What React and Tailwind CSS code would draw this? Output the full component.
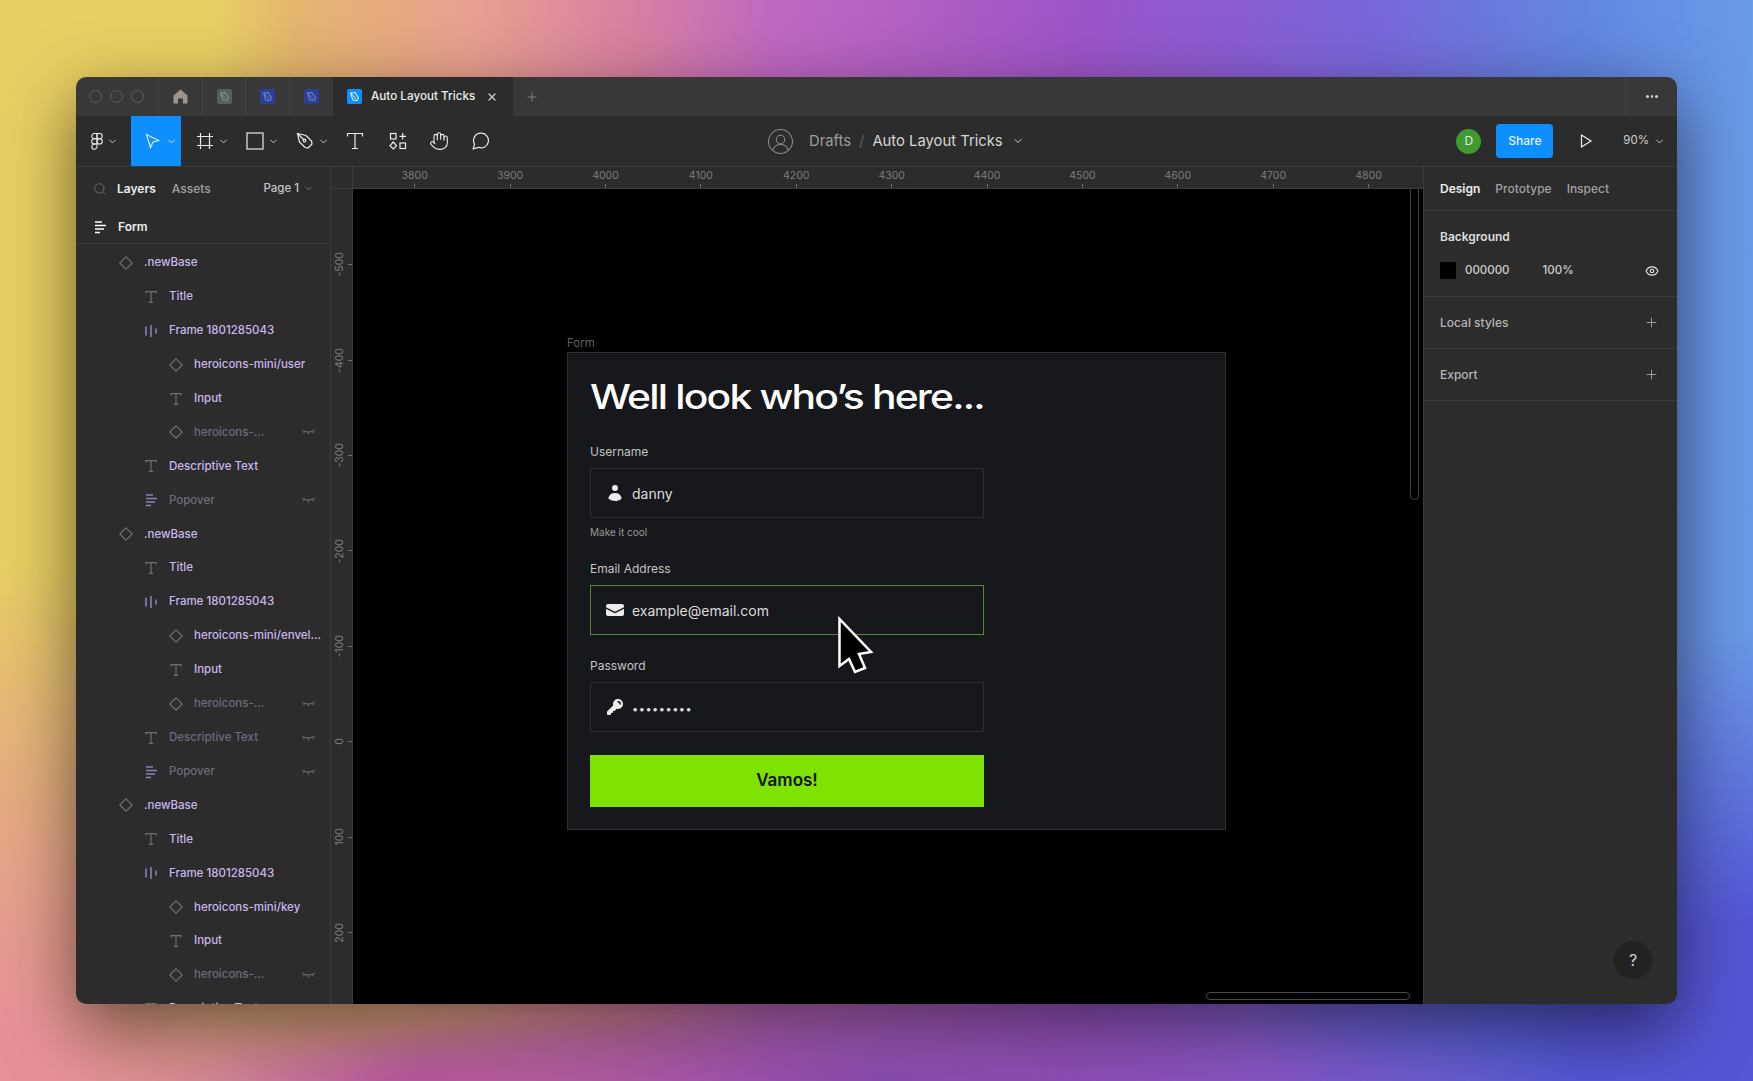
import { ChevronDown, Eye, Figma, Hand, Plus, Search, X } from 'lucide-react'

const LAYERS = [
  { d: 0, icon: 'diamond', label: '.newBase' },
  { d: 1, icon: 'text', label: 'Title' },
  { d: 1, icon: 'bars', label: 'Frame 1801285043' },
  { d: 2, icon: 'diamond', label: 'heroicons-mini/user' },
  { d: 2, icon: 'text', label: 'Input' },
  { d: 2, icon: 'diamond', label: 'heroicons-...', hidden: true },
  { d: 1, icon: 'text', label: 'Descriptive Text' },
  { d: 1, icon: 'lines', label: 'Popover', hidden: true },
  { d: 0, icon: 'diamond', label: '.newBase' },
  { d: 1, icon: 'text', label: 'Title' },
  { d: 1, icon: 'bars', label: 'Frame 1801285043' },
  { d: 2, icon: 'diamond', label: 'heroicons-mini/envel...' },
  { d: 2, icon: 'text', label: 'Input' },
  { d: 2, icon: 'diamond', label: 'heroicons-...', hidden: true },
  { d: 1, icon: 'text', label: 'Descriptive Text', hidden: true },
  { d: 1, icon: 'lines', label: 'Popover', hidden: true },
  { d: 0, icon: 'diamond', label: '.newBase' },
  { d: 1, icon: 'text', label: 'Title' },
  { d: 1, icon: 'bars', label: 'Frame 1801285043' },
  { d: 2, icon: 'diamond', label: 'heroicons-mini/key' },
  { d: 2, icon: 'text', label: 'Input' },
  { d: 2, icon: 'diamond', label: 'heroicons-...', hidden: true },
  { d: 1, icon: 'text', label: 'Descriptive Text' },
]

const DEPTH = ['pl-[42px]', 'pl-[67px]', 'pl-[92px]']
const TOP_RULER = [3800, 3900, 4000, 4100, 4200, 4300, 4400, 4500, 4600, 4700, 4800]
const LEFT_RULER = [-500, -400, -300, -200, -100, 0, 100, 200]

function FileIcon({ bg, fg }) {
  return (
    <svg width="15" height="15" viewBox="0 0 15 15">
      <rect width="15" height="15" rx="2" fill={bg} />
      <path d="M3.5 4 8 3.5 11.5 9 10 11.5 6 11Z" fill="none" stroke={fg} strokeWidth="1.1" />
      <path d="M4 4 9 10" stroke={fg} strokeWidth="0.9" />
    </svg>
  )
}

function LayerIcon({ type, muted }) {
  if (type === 'diamond') {
    return (
      <svg className="shrink-0" width="16" height="16" viewBox="0 0 16 16" fill="none" stroke="#6f6f6f" strokeWidth="1.2">
        <path d="M8 1.8 14.2 8 8 14.2 1.8 8Z" />
      </svg>
    )
  }
  if (type === 'text') {
    return (
      <svg className="shrink-0" width="16" height="16" viewBox="0 0 16 16" fill="none" stroke="#6f6f6f" strokeWidth="1.2">
        <path d="M3 4.5V2.6h10v1.9M8 2.6v10.8M5.8 13.4h4.4" />
      </svg>
    )
  }
  if (type === 'bars') {
    return (
      <svg className="shrink-0" width="16" height="16" viewBox="0 0 16 16" stroke="#a58fd6" strokeWidth="1.3">
        <path d="M3 3.5v9M8 2v12M13 5.5v5" />
      </svg>
    )
  }
  return (
    <svg className="shrink-0" width="16" height="16" viewBox="0 0 16 16" stroke={muted ? '#8f7fb8' : '#ffffff'} strokeWidth="1.6">
      <path d="M3 3h7M3 6.5h11M3 10h9M3 13.5h5" />
    </svg>
  )
}

function ClosedEye() {
  return (
    <svg className="shrink-0" width="15" height="8" viewBox="0 0 15 8" fill="none" stroke="#77737f" strokeWidth="1">
      <path d="M1 2c3 2.6 10 2.6 13 0M3.5 3.6 2.4 5.4M7.5 4.4v2M11.5 3.6l1.1 1.8" />
    </svg>
  )
}

function LayerRow({ d, icon, label, hidden }) {
  return (
    <div className={`flex h-[33.92px] shrink-0 items-center gap-[10px] pr-[14px] ${DEPTH[d]}`}>
      <LayerIcon type={icon} muted />
      <span className={`flex-1 whitespace-nowrap text-[11.5px] font-medium ${hidden ? 'text-[#6f6b7c]' : 'text-[#c9b8ec]'}`}>
        {label}
      </span>
      {hidden && <ClosedEye />}
    </div>
  )
}

function ToolChevron() {
  return <ChevronDown size={11} strokeWidth={2} className="text-[#cfcfcf]" />
}

function ToolSlot({ children }) {
  return (
    <div className="flex h-full w-[50px] items-center pl-[14px]">
      <div className="flex h-[20px] w-[20px] items-center justify-center">{children}</div>
      <div className="ml-[3px]">
        <ToolChevron />
      </div>
    </div>
  )
}

function PlainTool({ children }) {
  return <div className="flex h-full w-[42px] items-center justify-center text-[#ececec]">{children}</div>
}

function Toolbar() {
  return (
    <div className="flex h-[51px] shrink-0 items-center border-b border-[#3c3c3c] bg-[#2c2c2c]">
      <div className="flex h-full w-[55px] items-center pl-[12px] text-[#ececec]">
        <Figma size={18} strokeWidth={1.4} />
        <div className="ml-[1px]">
          <ToolChevron />
        </div>
      </div>
      <div className="flex h-full w-[50px] items-center bg-[#0d8fff] pl-[12px]">
        <svg width="18" height="18" viewBox="0 0 18 18" fill="none" stroke="#d9ecff" strokeWidth="1.2">
          <path d="M3.5 2.5 15.5 8.5 10 10 7.5 15.5Z" />
        </svg>
        <div className="ml-[5px]">
          <ChevronDown size={11} strokeWidth={2} className="text-[#d9ecff]" />
        </div>
      </div>
      <div className="flex h-full text-[#ececec]">
        <ToolSlot>
          <svg width="18" height="18" viewBox="0 0 18 18" fill="none" stroke="currentColor" strokeWidth="1.2">
            <path d="M4.5 1v16M13.5 1v16M1 4.5h16M1 13.5h16" />
          </svg>
        </ToolSlot>
        <ToolSlot>
          <svg width="18" height="18" viewBox="0 0 18 18" fill="none" stroke="currentColor" strokeWidth="1.2">
            <rect x="1" y="1" width="16" height="16" />
          </svg>
        </ToolSlot>
        <ToolSlot>
          <svg width="18" height="18" viewBox="0 0 18 18" fill="none" stroke="currentColor" strokeWidth="1.2">
            <path d="M1.5 1.5 10 3.5 15.5 9 16 12 12 16 9 15.5 3.5 10Z" />
            <path d="M1.5 1.5 7.5 7.5" />
            <circle cx="8.5" cy="8.5" r="1.3" />
          </svg>
        </ToolSlot>
      </div>
      <div className="ml-[3px] flex h-full">
        <PlainTool>
          <svg width="18" height="18" viewBox="0 0 18 18" fill="none" stroke="currentColor" strokeWidth="1.2">
            <path d="M1.5 4.5V1.5h15v3M9 1.5v15M6 16.5h6" />
          </svg>
        </PlainTool>
        <PlainTool>
          <svg className="ml-[2px]" width="18" height="18" viewBox="0 0 18 18" fill="none" stroke="currentColor" strokeWidth="1.2">
            <rect x="1.5" y="1.5" width="5.5" height="5.5" />
            <rect x="11" y="11" width="5.5" height="5.5" />
            <path d="M13.7 1v6.5M10.5 4.3H17M4.3 10 7.5 13.7 4.3 17 1 13.7Z" />
          </svg>
        </PlainTool>
        <PlainTool>
          <Hand size={20} strokeWidth={1.3} />
        </PlainTool>
        <PlainTool>
          <svg width="18" height="18" viewBox="0 0 18 18" fill="none" stroke="currentColor" strokeWidth="1.2">
            <path d="M9.5 1.2a7.3 7.3 0 1 1-3 14.1L1.2 16.8l1.4-4.6A7.3 7.3 0 0 1 9.5 1.2Z" />
          </svg>
        </PlainTool>
      </div>
      <div className="ml-[266px] flex items-center text-[14.8px]">
        <svg width="25" height="25" viewBox="0 0 25 25" fill="none" stroke="#8a8a8a" strokeWidth="1.1">
          <circle cx="12.5" cy="12.5" r="12" />
          <circle cx="12.5" cy="10.5" r="4.2" />
          <path d="M5 21c1-4 4-5.5 7.5-5.5S19 17 20 21" />
        </svg>
        <span className="ml-[16px] text-[#9d9d9d]">Drafts</span>
        <span className="mx-[8px] text-[#5f5f5f]">/</span>
        <span className="text-[#d6d6d6]">Auto Layout Tricks</span>
        <ChevronDown size={12} strokeWidth={2} className="ml-[9px] text-[#cfcfcf]" />
      </div>
      <div className="ml-auto flex items-center pr-[12px]">
        <div className="flex h-[25px] w-[25px] items-center justify-center rounded-full bg-[#3f9a2f] text-[12px] text-[#e8e8e8]">
          D
        </div>
        <div className="ml-[15px] flex h-[34px] w-[57px] items-center justify-center rounded-[4px] bg-[#0d8fff] text-[12px] font-medium text-[#e6f3ff]">
          Share
        </div>
        <svg className="ml-[26px]" width="14" height="16" viewBox="0 0 14 16" fill="none" stroke="#ececec" strokeWidth="1.2">
          <path d="M2.5 2 12 8 2.5 14Z" />
        </svg>
        <span className="ml-[30px] text-[11.5px] text-[#cfcfcf]">90%</span>
        <ChevronDown size={11} strokeWidth={2} className="ml-[5px] text-[#cfcfcf]" />
      </div>
    </div>
  )
}

function TabBar() {
  return (
    <div className="flex h-[39px] shrink-0 bg-[#383838]">
      <div className="flex w-[82px] items-center gap-[8px] pl-[13px]">
        <span className="h-[13px] w-[13px] rounded-full border border-[#5e5e5e]" />
        <span className="h-[13px] w-[13px] rounded-full border border-[#5e5e5e]" />
        <span className="h-[13px] w-[13px] rounded-full border border-[#5e5e5e]" />
      </div>
      <div className="flex w-[44px] items-center justify-center border-l border-[#414141]">
        <svg width="15" height="15" viewBox="0 0 15 15" fill="#9c938c">
          <path d="M7.5 0.5 14.5 6.5V14.5H10V9.5H5V14.5H0.5V6.5Z" />
        </svg>
      </div>
      <div className="flex w-[43px] items-center justify-center border-l border-[#414141]">
        <FileIcon bg="#55605a" fg="#8b8f88" />
      </div>
      <div className="flex w-[44px] items-center justify-center border-l border-[#414141]">
        <FileIcon bg="#2b3f94" fg="#6f86cf" />
      </div>
      <div className="flex w-[44px] items-center justify-center border-l border-[#414141]">
        <FileIcon bg="#2b3f94" fg="#6f86cf" />
      </div>
      <div className="flex w-[180px] items-center bg-[#2c2c2c] pl-[14px]">
        <FileIcon bg="#0d8fff" fg="#e6f3ff" />
        <span className="ml-[9px] whitespace-nowrap text-[11.7px] font-medium text-[#ececec]">Auto Layout Tricks</span>
        <X size={12} strokeWidth={2.4} className="ml-[11px] text-[#cfcfcf]" />
      </div>
      <div className="flex w-[38px] items-center justify-center">
        <Plus size={14} strokeWidth={1.5} className="text-[#8a8a8a]" />
      </div>
      <div className="ml-auto flex w-[52px] items-center justify-center border-l border-[#414141] pl-[1px]">
        <div className="flex gap-[2px]">
          <span className="h-[2.5px] w-[2.5px] rounded-full bg-[#d0d0d0]" />
          <span className="h-[2.5px] w-[2.5px] rounded-full bg-[#d0d0d0]" />
          <span className="h-[2.5px] w-[2.5px] rounded-full bg-[#d0d0d0]" />
        </div>
      </div>
    </div>
  )
}

function Sidebar() {
  return (
    <div className="flex w-[255px] shrink-0 flex-col overflow-hidden border-r border-[#3c3c3c] bg-[#2c2c2c]">
      <div className="flex h-[43px] shrink-0 items-center pl-[17px] pr-[16px] text-[12px] font-medium">
        <Search size={14} strokeWidth={1.4} className="text-[#777777]" />
        <span className="ml-[10px] font-semibold text-[#ececec]">Layers</span>
        <span className="ml-[16px] text-[#a0a0a0]">Assets</span>
        <span className="ml-auto text-[11.5px] text-[#c4c4c4]">Page 1</span>
        <ChevronDown size={11} strokeWidth={1.6} className="ml-[4px] text-[#8a8a8a]" />
      </div>
      <div className="flex h-[34px] shrink-0 items-center gap-[10px] border-b border-[#3a3a3a] pl-[16px]">
        <LayerIcon type="lines" />
        <span className="text-[12px] font-semibold text-[#ececec]">Form</span>
      </div>
      <div className="pt-[2px]">
        {LAYERS.map((row, i) => (
          <LayerRow key={i} {...row} />
        ))}
      </div>
    </div>
  )
}

function TopRuler() {
  return (
    <div className="flex h-[22px] shrink-0 border-b border-[#3c3c3c] bg-[#2c2c2c]">
      <div className="w-[22px] shrink-0 border-r border-[#3c3c3c]" />
      <div className="flex pl-[14px]">
        {TOP_RULER.map((n) => (
          <div key={n} className="flex w-[95.4px] shrink-0 flex-col items-center justify-end">
            <span className="text-[10.5px] leading-[13px] text-[#7c7c7c]">{n}</span>
            <span className="mt-[2px] h-[4px] w-px bg-[#6a6a6a]" />
          </div>
        ))}
      </div>
    </div>
  )
}

function LeftRuler() {
  return (
    <div className="w-[22px] shrink-0 overflow-hidden border-r border-[#3c3c3c] bg-[#2c2c2c] pt-[28px]">
      {LEFT_RULER.map((n) => (
        <div key={n} className="flex h-[95.4px] items-center justify-end">
          <span className="rotate-180 text-[10.5px] leading-[13px] text-[#7c7c7c] [writing-mode:vertical-rl]">{n}</span>
          <span className="ml-[2px] h-px w-[4px] bg-[#6a6a6a]" />
        </div>
      ))}
    </div>
  )
}

function Field({ label, active, icon, children, className }) {
  return (
    <div className={className}>
      <div className="text-[12px] leading-[16px] text-[#c4c4c4]">{label}</div>
      <div className={`mt-[8px] flex h-[50px] items-center border pl-[14px] ${active ? 'border-[#55862f]' : 'border-[#2f2f2f]'}`}>
        <div className="flex w-[20px] justify-center">{icon}</div>
        <div className="ml-[7px] text-[14px] text-[#dcdcdc]">{children}</div>
      </div>
    </div>
  )
}

function FormFrame() {
  return (
    <div className="h-[478px] w-[659px] border border-[#2f2f2f] bg-[#16181b] pl-[22px] pt-[22px]">
      <div className="w-[394px]">
        <h1 className="h-[44px] origin-left scale-x-[1.2] whitespace-nowrap text-[34px] font-medium leading-[44px] tracking-[-1.5px] text-white">
          Well look who’s here...
        </h1>
        <Field
          className="mt-[25px]"
          label="Username"
          icon={
            <svg width="20" height="20" viewBox="0 0 20 20" fill="#ececec">
              <path d="M10 8a3 3 0 100-6 3 3 0 000 6zM3.465 14.493a1.23 1.23 0 00.41 1.412A9.957 9.957 0 0010 18c2.31 0 4.438-.784 6.131-2.1.43-.333.604-.903.408-1.41a7.002 7.002 0 00-13.074.003z" />
            </svg>
          }
        >
          danny
        </Field>
        <div className="mt-[7px] text-[10px] leading-[14px] text-[#9a9a9a]">Make it cool</div>
        <Field
          className="mt-[22px]"
          label="Email Address"
          active
          icon={
            <svg width="20" height="20" viewBox="0 0 20 20" fill="#ececec">
              <path d="M3 4a2 2 0 00-2 2v1.161l8.441 4.221a1.25 1.25 0 001.118 0L19 7.162V6a2 2 0 00-2-2H3z" />
              <path d="M19 8.839l-7.77 3.885a2.75 2.75 0 01-2.46 0L1 8.839V14a2 2 0 002 2h14a2 2 0 002-2V8.839z" />
            </svg>
          }
        >
          example@email.com
        </Field>
        <Field
          className="mt-[23px]"
          label="Password"
          icon={
            <svg width="20" height="20" viewBox="0 0 20 20" fill="#ececec">
              <path
                fillRule="evenodd"
                d="M8 7a5 5 0 113.61 4.804l-1.903 1.903A1 1 0 019 14H8v1a1 1 0 01-1 1H6v1a1 1 0 01-1 1H3a1 1 0 01-1-1v-2a1 1 0 01.293-.707L8.196 8.39A5.002 5.002 0 018 7zm5-3a.75.75 0 000 1.5A1.5 1.5 0 0114.5 7 .75.75 0 0016 7a3 3 0 00-3-3z"
              />
            </svg>
          }
        >
          <span className="text-[11px] tracking-[0.5px]">•••••••••</span>
        </Field>
        <div className="mt-[23px] flex h-[52px] items-center justify-center bg-[#7ee300] text-[17px] font-semibold text-[#111111]">
          Vamos!
        </div>
      </div>
    </div>
  )
}

function Canvas() {
  return (
    <div className="relative flex-1 overflow-hidden bg-black pl-[214px] pt-[147px]">
      <div className="h-[16px] text-[11.5px] leading-[14px] text-[#5f5f5f]">Form</div>
      <FormFrame />
      {/* Scrollbars */}
      <div className="absolute right-[4px] top-[-6px] h-[317px] w-[9px] rounded-full border border-[#3f3f3f]" />
      <div className="absolute bottom-[4px] left-[853px] h-[8px] w-[204px] rounded-full border border-[#4a4a4a]" />
      {/* Cursor */}
      <svg className="absolute left-[484px] top-[427px]" width="37" height="59" viewBox="0 0 37 59">
        <path
          d="M2.5 3V50L12 43 18 56 28 52 22 38 34 36Z"
          fill="#000000"
          stroke="#ffffff"
          strokeWidth="2.5"
          strokeLinejoin="miter"
        />
      </svg>
    </div>
  )
}

function PanelSection({ title }) {
  return (
    <div className="flex h-[52px] items-center justify-between border-b border-[#3c3c3c] pl-[16px] pr-[18px]">
      <span className="text-[12px] font-medium text-[#b4b4b4]">{title}</span>
      <Plus size={15} strokeWidth={1.3} className="text-[#b4b4b4]" />
    </div>
  )
}

function RightPanel() {
  return (
    <div className="relative w-[254px] shrink-0 border-l border-[#3c3c3c] bg-[#2c2c2c]">
      <div className="flex h-[44px] items-center gap-[15px] border-b border-[#3c3c3c] pl-[16px] text-[12px] font-medium">
        <span className="font-semibold text-[#ececec]">Design</span>
        <span className="text-[#a0a0a0]">Prototype</span>
        <span className="text-[#a0a0a0]">Inspect</span>
      </div>
      <div className="h-[86px] border-b border-[#3c3c3c] pl-[16px] pr-[18px] pt-[17px]">
        <div className="text-[12px] font-semibold leading-[18px] text-[#dedede]">Background</div>
        <div className="mt-[16px] flex items-center text-[11.5px] font-medium text-[#cfcfcf]">
          <span className="h-[17px] w-[16px] rounded-[1px] bg-black" />
          <span className="ml-[9px]">000000</span>
          <span className="ml-[33px]">100%</span>
          <Eye size={14} strokeWidth={2} className="ml-auto text-[#e0e0e0]" />
        </div>
      </div>
      <PanelSection title="Local styles" />
      <PanelSection title="Export" />
      {/* Help */}
      <div className="absolute bottom-[25px] right-[25px] flex h-[38px] w-[38px] items-center justify-center rounded-full bg-[#222222] text-[16px] text-[#d0d0d0]">
        ?
      </div>
    </div>
  )
}

export default function App() {
  return (
    <div className="h-[1081px] overflow-hidden bg-[radial-gradient(ellipse_420px_520px_at_0%_100%,#e8909a_10%,#e0909a80_60%,transparent),radial-gradient(ellipse_500px_70px_at_22%_100%,#b8559f,transparent),radial-gradient(ellipse_700px_70px_at_50%_100%,#8a4cb0,transparent),radial-gradient(ellipse_500px_450px_at_100%_100%,#5555d5_35%,transparent),linear-gradient(90deg,#e9cf62_0%,#e9cf62_12%,#e3b56e_17%,#e99f90_27%,#d880a0_36%,#c068c0_44%,#9c55c8_62%,#7a66dc_78%,#6186e0_90%,#6a9be6_100%)] pl-[76px] pr-[76px] pt-[77px] font-['Inter',sans-serif]">
      <div className="flex h-[927px] flex-col overflow-hidden rounded-[10px] shadow-[0_24px_70px_rgba(0,0,0,0.55)]">
        <TabBar />
        <Toolbar />
        <div className="flex min-h-0 flex-1">
          <Sidebar />
          <div className="flex min-w-0 flex-1 flex-col">
            <TopRuler />
            <div className="flex min-h-0 flex-1">
              <LeftRuler />
              <Canvas />
            </div>
          </div>
          <RightPanel />
        </div>
      </div>
    </div>
  )
}
